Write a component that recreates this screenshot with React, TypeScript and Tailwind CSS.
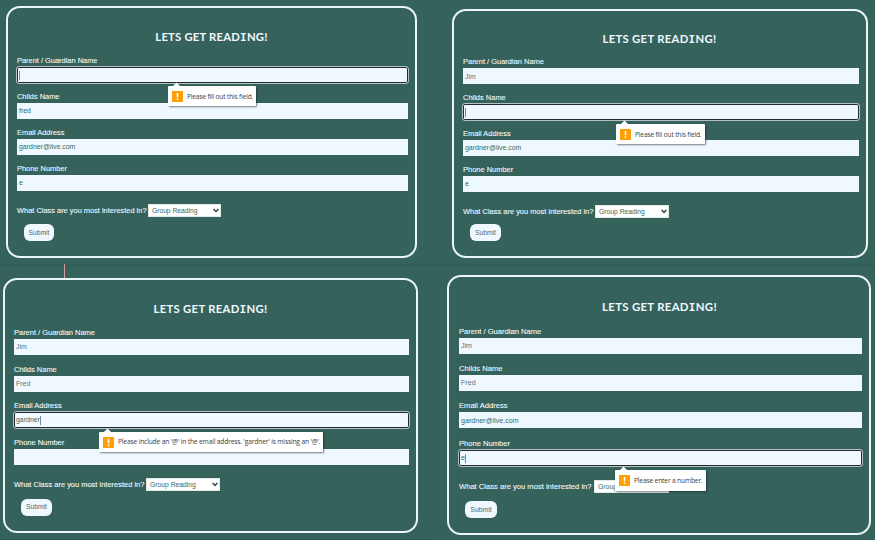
import React from "react";

type Field = { label: string; value: string; tone?: string; focused?: boolean };

type FormProps = {
  card: string;
  heading: string;
  title: string;
  group: string;
  input: string;
  labelText: string;
  valueText: string;
  smallText: string;
  question: string;
  questionLabel: string;
  select: string;
  submit: string;
  tip: string;
  tipText: string;
  message: string;
  fields: Field[];
};

const LABEL_FONT = "font-['Liberation_Sans',Arial,sans-serif]";

function TextField({ field, group, input, labelText, valueText }: { field: Field; group: string; input: string; labelText: string; valueText: string }) {
  return (
    <div className={group}>
      <div className={`h-[12px] leading-[11px] whitespace-nowrap text-[#f0f8ff] [-webkit-text-stroke:0.1px_#f0f8ff] ${labelText}`}>{field.label}</div>
      <div
        className={`flex items-center bg-[#f0f8ff] pt-[1px] pl-[2px] whitespace-nowrap ${input} ${valueText} ${field.tone ?? "text-[#386860]"} ${
          field.focused ? "rounded-[2px] outline outline-[1px] outline-[#b4c2c2] ring-1 ring-inset ring-[#252a2c]" : ""
        }`}
      >
        <span>{field.value}</span>
        {field.focused && <span className="h-[9px] w-px bg-[#7b8a8f]" />}
      </div>
    </div>
  );
}

function Tip({ box, textClass, message }: { box: string; textClass: string; message: string }) {
  return (
    <div className={`absolute flex items-center rounded-[1px] bg-white pl-[4px] shadow-[1px_1px_2px_0px_rgba(30,40,40,0.6)] ${box}`}>
      <svg className="absolute left-[4px] -top-[4px]" width="9" height="5" viewBox="0 0 9 5">
        <path d="M0 5 L4.5 0.6 L9 5 Z" fill="#fff" />
      </svg>
      <svg width="11" height="11" viewBox="0 0 11 11" className="shrink-0">
        <rect width="11" height="11" rx="0.6" fill="#ff9f05" />
        <path d="M4.7 2h1.6v4.2H4.7zM4.7 7.4h1.6v1.6H4.7z" fill="#fff" />
      </svg>
      <span className={`ml-[4px] pt-[1px] font-['Open_Sans','Noto_Sans',sans-serif] whitespace-nowrap text-[#404040] ${textClass}`}>{message}</span>
    </div>
  );
}

function ReadingForm(p: FormProps) {
  return (
    <section className={`relative shrink-0 rounded-[14px] border-2 border-[#eaf5f7] ${p.card}`}>
      <div className={p.heading}>
        <h2 className={`text-center font-['Lato',sans-serif] leading-[12px] font-bold whitespace-nowrap text-[#f0f8ff] ${p.title}`}>
          LETS GET READ<span className="font-['DejaVu_Sans_Mono',monospace] text-[11px]">I</span>NG!
        </h2>
      </div>
      {p.fields.map((f) => (
        <TextField key={f.label} field={f} group={p.group} input={p.input} labelText={p.labelText} valueText={p.valueText} />
      ))}
      <div className={`flex items-center ${p.question}`}>
        <span className={`whitespace-nowrap text-[#f0f8ff] [-webkit-text-stroke:0.1px_#f0f8ff] ${p.labelText} ${p.questionLabel}`}>
          What Class are you most interested in?
        </span>
        <div className={`flex h-[13px] items-center justify-between border border-[#dfe9e8] bg-white pr-[1px] pl-[3px] text-[#386860] ${p.smallText} ${p.select}`}>
          <span className="pt-[1px] whitespace-nowrap">Group Reading</span>
          <svg width="6" height="5" viewBox="0 0 6 5" fill="none">
            <path d="M0.6 1 L3 3.4 L5.4 1" stroke="#24443e" strokeWidth="1.4" />
          </svg>
        </div>
      </div>
      <div className={`flex items-center justify-center rounded-[6px] bg-[#f0f8ff] pt-[1px] text-[#56666f] ${p.smallText} ${p.submit}`}>Submit</div>
      <Tip box={p.tip} textClass={p.tipText} message={p.message} />
    </section>
  );
}

export default function App() {
  return (
    <main className={`relative flex h-[540px] w-[875px] overflow-hidden bg-[#35625b] ${LABEL_FONT}`}>
      <div className="flex w-[447px] shrink-0 flex-col">
        <ReadingForm
          card="mt-[6px] ml-[6px] h-[252px] w-[411px] pl-[9px]"
          heading="h-[46.6px] w-[389px] pt-[23px]"
          title="text-[11.3px] tracking-[0.2px]"
          group="h-[36.2px]"
          input="h-[16px] w-[391px]"
          labelText="text-[7.43px]"
          valueText="text-[6.95px]"
          smallText="text-[6.7px]"
          question="h-[14px] mt-[4.5px]"
          questionLabel="w-[131px]"
          select="w-[73px]"
          submit="mt-[6px] ml-[7px] h-[17px] w-[30px]"
          tip="left-[160px] top-[78px] h-[20px] w-[88px]"
          tipText="text-[6.6px] tracking-[-0.16px]"
          message="Please fill out this field."
          fields={[
            { label: "Parent / Guardian Name", value: "", focused: true },
            { label: "Childs Name", value: "fred" },
            { label: "Email Address", value: "gardner@live.com" },
            { label: "Phone Number", value: "e" },
          ]}
        />
        <div className="mt-[6px] h-[14px] border-t border-[#315c55] pl-[64px]">
          <div className="-mt-px h-[14px] w-px bg-[#d79a9e]" />
        </div>
        <ReadingForm
          card="mt-0 ml-[3px] h-[255px] w-[415px] pl-[9px]"
          heading="h-[47px] w-[393px] pt-[23px]"
          title="text-[11.3px] tracking-[0.3px]"
          group="h-[36.5px]"
          input="h-[16px] w-[395px]"
          labelText="text-[7.48px]"
          valueText="text-[6.95px]"
          smallText="text-[6.75px]"
          question="h-[14px] mt-[4.5px]"
          questionLabel="w-[132px]"
          select="w-[74px]"
          submit="mt-[7px] ml-[7px] h-[17px] w-[31px]"
          tip="left-[94px] top-[152px] h-[20px] w-[224px]"
          tipText="text-[6.7px] tracking-[-0.17px]"
          message="Please include an '@' in the email address. 'gardner' is missing an '@'."
          fields={[
            { label: "Parent / Guardian Name", value: "Jim", tone: "text-[#5f727e]" },
            { label: "Childs Name", value: "Fred", tone: "text-[#5f727e]" },
            { label: "Email Address", value: "gardner", focused: true },
            { label: "Phone Number", value: "" },
          ]}
        />
        <div className="mt-[6px] h-px w-[430px] bg-[#28564f]" />
      </div>
      <div className="flex flex-1 flex-col">
        <ReadingForm
          card="mt-[9px] ml-[5px] h-[249px] w-[416px] pl-[9px]"
          heading="h-[45.3px] w-[393px] pt-[22px]"
          title="text-[11.3px] tracking-[0.3px]"
          group="h-[35.9px]"
          input="h-[16px] w-[396px]"
          labelText="text-[7.47px]"
          valueText="text-[6.95px]"
          smallText="text-[6.75px]"
          question="h-[14px] mt-[4.5px]"
          questionLabel="w-[132px]"
          select="w-[74px]"
          submit="mt-[6px] ml-[7px] h-[17px] w-[31px]"
          tip="left-[162px] top-[113px] h-[20px] w-[89px]"
          tipText="text-[6.6px] tracking-[-0.15px]"
          message="Please fill out this field."
          fields={[
            { label: "Parent / Guardian Name", value: "Jim", tone: "text-[#5f727e]" },
            { label: "Childs Name", value: "", focused: true },
            { label: "Email Address", value: "gardner@live.com" },
            { label: "Phone Number", value: "e" },
          ]}
        />
        <div className="mt-[6px] h-[11px] border-t border-[#315c55]" />
        <ReadingForm
          card="ml-0 h-[260px] w-[424px] pl-[10px]"
          heading="h-[48.7px] w-[401px] pt-[24px]"
          title="text-[11.4px] tracking-[0.3px]"
          group="h-[37.4px]"
          input="h-[16px] w-[403px]"
          labelText="text-[7.6px]"
          valueText="text-[7.1px]"
          smallText="text-[6.85px]"
          question="h-[14px] mt-[4.5px]"
          questionLabel="w-[135px]"
          select="w-[75px]"
          submit="mt-[7px] ml-[6px] h-[17px] w-[32px]"
          tip="left-[166px] top-[193px] h-[21px] w-[91px]"
          tipText="text-[6.7px] tracking-[-0.18px]"
          message="Please enter a number."
          fields={[
            { label: "Parent / Guardian Name", value: "Jim", tone: "text-[#5f727e]" },
            { label: "Childs Name", value: "Fred", tone: "text-[#5f727e]" },
            { label: "Email Address", value: "gardner@live.com" },
            { label: "Phone Number", value: "e", focused: true },
          ]}
        />
      </div>
    </main>
  );
}
